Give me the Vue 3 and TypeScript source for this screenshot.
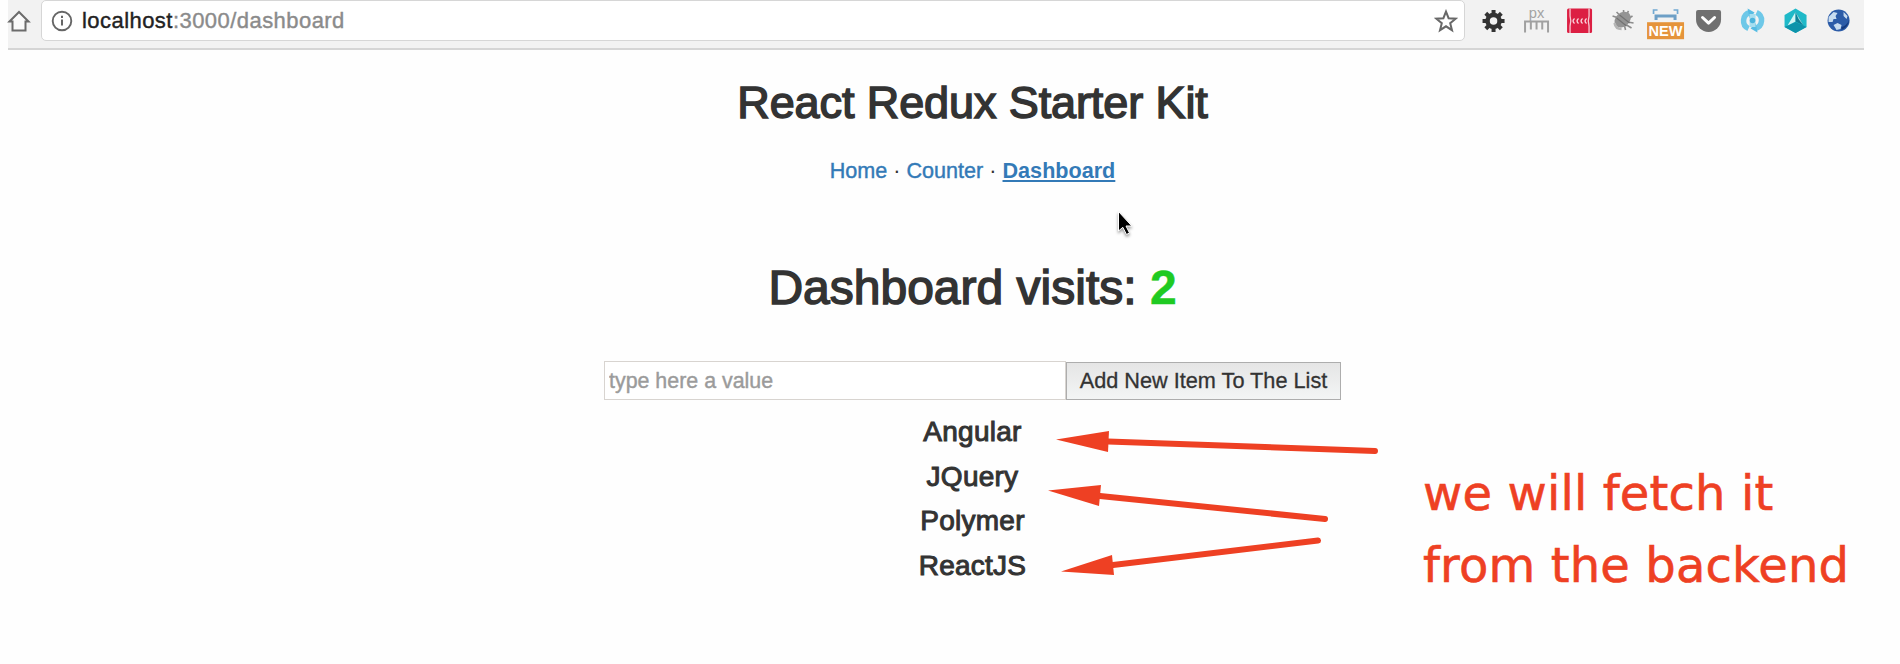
<script setup lang="ts">
import { ref } from 'vue'

interface Arrow {
  head: string
  line: [number, number, number, number]
}

const visits = ref<number>(2)
const draft = ref<string>('')
const items = ref<string[]>(['Angular', 'JQuery', 'Polymer', 'ReactJS'])
const notes: string[] = ['we will fetch it', 'from the backend']
const gearTeeth: number[] = [0, 45, 90, 135, 180, 225, 270, 315]

const arrows: Arrow[] = [
  { head: '1056,439.5 1109,431 1108,452', line: [1108, 441.5, 1375, 451] },
  { head: '1048,490.5 1101,485 1099,506', line: [1100, 496, 1325, 519] },
  { head: '1061,571.5 1112,555 1114,575', line: [1113, 565, 1318, 540.5] },
]

function addItem(): void {
  const value = draft.value.trim()
  if (value) {
    items.value.push(value)
    draft.value = ''
  }
}
</script>

<template>
  <div class="page">
    <header class="toolbar">
      <svg class="home" viewBox="0 0 24 24">
        <path d="M2.5 12.5 12 3l9.500 9.500H18.500V21.500H5.500V12.500Z" fill="#fafafa" stroke="#6b6b6b" stroke-width="2" />
      </svg>
      <div class="omnibox">
        <svg class="info" viewBox="0 0 22 22">
          <circle cx="11" cy="11" r="9.300" fill="none" stroke="#666" stroke-width="1.900" />
          <path d="M11 9.600v6M11 5.800v2.100" stroke="#666" stroke-width="2" />
        </svg>
        <span class="url"><span class="host">localhost</span>:3000/dashboard</span>
        <svg class="star" viewBox="0 0 24 24">
          <path d="M12 2.600 14.600 9.200 21.700 9.700 16.200 14.200 18 21.200 12 17.300 6 21.200 7.800 14.200 2.300 9.700 9.400 9.200Z" fill="none" stroke="#686868" stroke-width="2" />
        </svg>
      </div>
      <div class="extensions">
        <svg viewBox="-21.500 -21 43 50">
          <g fill="#333">
            <rect v-for="a in gearTeeth" :key="a" x="-2" y="-11" width="4" height="6" :transform="`rotate(${a})`" />
          </g>
          <circle r="6" fill="none" stroke="#333" stroke-width="4.500" />
        </svg>
        <svg viewBox="-21.500 -21 43 50">
          <text class="px" x="0" y="-3.500" text-anchor="middle" textLength="15.500" lengthAdjust="spacingAndGlyphs">px</text>
          <path d="M-11.500 11.500V.5H11.500V11.500M-5.700 1V8.500M0 1V8.500M5.700 1V8.500" fill="none" stroke="#a0a0a0" stroke-width="2" />
        </svg>
        <svg viewBox="-21.500 -21 43 50">
          <rect x="-12.500" y="-12.500" width="25" height="24.500" rx="1.500" fill="#dc1f43" />
          <path d="M-9.500-12.500V-5Q-8 0-9.500 5V12M9.500-12.500V-5Q8 0 9.500 5V12" fill="none" stroke="#f7c9d2" stroke-width="1.300" />
          <path d="M-5-2.500q-3 2.500 0 5M-1-2.500q-3 2.500 0 5M3-2.500q-3 2.500 0 5M7-2.500q-3 2.500 0 5" fill="none" stroke="#f9d5dc" stroke-width="1.400" />
        </svg>
        <svg viewBox="-21.500 -21 43 50">
          <path d="M-10-5-4-3M-6-9-2-5M1-11V-5M6-10 3-5M10-5 5-2M11 2 5 1M9 7 4 4M3 9 2 5" stroke="#8c8c8c" stroke-width="1.600" />
          <ellipse cx="1" cy="-1" rx="9" ry="7" transform="rotate(-42)" fill="#949494" />
          <path d="M-6-3 4 5M-3-6 7 2" stroke="#737373" stroke-width="1.200" />
          <path d="M-8 2Q-7 8-1 8" fill="none" stroke="#b5b5b5" stroke-width="2.500" />
        </svg>
        <svg viewBox="-21.500 -21 43 50">
          <path d="M-12-7V-11H-8M8-11H12V-7" fill="none" stroke="#72a9d2" stroke-width="1.700" />
          <path d="M-9.500-1V-5H9.500V-1" fill="none" stroke="#6d9fc6" stroke-width="3" />
          <rect x="-18.500" y="1.200" width="37" height="17" fill="#e5943b" />
          <text class="new" x="0" y="15.200" text-anchor="middle" textLength="34" lengthAdjust="spacingAndGlyphs">NEW</text>
        </svg>
        <svg viewBox="-21.500 -21 43 50">
          <path d="M-10.500-11H10.500Q12.500-11 12.500-9V-1.500A12.500 12.500 0 0 1-12.500-1.500V-9Q-12.500-11-10.500-11Z" fill="#707070" />
          <path d="M-6-3.500 0 2.200 6-3.500" fill="none" stroke="#fff" stroke-width="3" stroke-linecap="round" stroke-linejoin="round" />
        </svg>
        <svg viewBox="-21.500 -21 43 50">
          <path d="M-2.500-8.500A8.500 8.500 0 0 0-4 7.500M2.500 7.500A8.500 8.500 0 0 0 4-8.500" fill="none" stroke="#6ec8e8" stroke-width="5.500" />
          <path d="M-5-12.500 2-8.500-3-3ZM5 11.500-2 7.500 3 2Z" fill="#55bce3" />
          <path d="M0-7V6" stroke="#a6deef" stroke-width="6" />
          <circle cy="-.5" r="2.800" fill="#4bb4dc" />
        </svg>
        <svg viewBox="-21.500 -21 43 50">
          <path d="M0-12.500 11-6V6L0 12-11 6V-6Z" fill="#1fb9c8" />
          <path d="M-11 6 0 1 11 6 0 12Z" fill="#0d93aa" />
          <path d="M0-9-8 4.500 0 .5Z" fill="#d3f4f3" />
          <path d="M0-9 8 4.500 0 .5Z" fill="#107f96" />
          <path d="M0-9 8 4.500 3-2Z" fill="#a8e6e8" />
        </svg>
        <svg viewBox="-21.500 -21 43 50">
          <circle cy="-.5" r="11" fill="#2c5ca8" />
          <path d="M-10-4-5-9-1-8-3-5-2-2-5-2-6 1-10 1ZM-5 4-1 2 3 4 2 8-2 9ZM5-9 9-5 8-2 5-5Z" fill="#c8dcf0" />
          <path d="M3 9Q10 6 10.500-1Q8 5 3 6Z" fill="#153a7d" />
        </svg>
      </div>
    </header>

    <main>
      <h1>React Redux Starter Kit</h1>
      <nav>
        <a>Home</a> · <a>Counter</a> · <a class="active">Dashboard</a>
      </nav>
      <h2>Dashboard visits: <span class="count">{{ visits }}</span></h2>
      <form @submit.prevent="addItem">
        <input v-model="draft" type="text" placeholder="type here a value" />
        <button type="submit">Add New Item To The List</button>
      </form>
      <ul>
        <li v-for="item in items" :key="item">{{ item }}</li>
      </ul>
    </main>

    <svg class="overlay" viewBox="0 0 1900 664">
      <g v-for="arrow in arrows" :key="arrow.head">
        <line :x1="arrow.line[0]" :y1="arrow.line[1]" :x2="arrow.line[2]" :y2="arrow.line[3]" />
        <polygon :points="arrow.head" />
      </g>
      <path class="cursor" d="M1118.500 211.500V231L1122.800 227.300 1126.500 234.500 1129.500 233 1126 226H1131.800Z" />
    </svg>
    <div class="annotation">
      <div v-for="note in notes" :key="note">{{ note }}</div>
    </div>
  </div>
</template>

<style>
body {
  margin: 0;
  background: #fff;
}
</style>

<style scoped>
.page {
  position: relative;
  width: 1900px;
  height: 664px;
  overflow: hidden;
  background: #fefefe;
  color: #333;
  font-family: "Liberation Sans", Arial, sans-serif;
}

.toolbar {
  display: flex;
  box-sizing: border-box;
  width: 1856px;
  height: 50px;
  margin-left: 8px;
  background: #f2f2f2;
  border-bottom: 2px solid #d5d5d5;
}

.home {
  flex: none;
  width: 24px;
  height: 24px;
  margin: 9px 10px 0 -1px;
}

.omnibox {
  display: flex;
  flex: none;
  align-items: center;
  box-sizing: border-box;
  width: 1424px;
  height: 41px;
  padding: 1px 6px 0 9px;
  background: #fff;
  border: 1px solid #d6d6d6;
  border-radius: 5px;
}

.info {
  width: 22px;
  height: 22px;
  margin-right: 9px;
}

.url {
  flex: 1;
  color: #8b8b8b;
  font-size: 22px;
  line-height: 26px;
  letter-spacing: 0.45px;
  -webkit-text-stroke: 0.4px;
}

.host {
  color: #222;
}

.star {
  width: 24px;
  height: 24px;
}

.extensions {
  display: flex;
  margin-left: 7px;
}

.extensions svg {
  flex: none;
  width: 43.1px;
  height: 50px;
}

.px {
  fill: #a3a3a3;
  font: 15px "Liberation Sans", sans-serif;
}

.new {
  fill: #fff;
  font: bold 14.5px "Liberation Sans", sans-serif;
}

main {
  display: flex;
  flex-direction: column;
  align-items: center;
  padding-left: 45px;
}

h1,
h2 {
  margin: 0;
  font-weight: 400;
  -webkit-text-stroke: 1.5px #333;
}

h1 {
  margin-top: 28px;
  font-size: 45px;
  line-height: 50px;
  letter-spacing: -0.1px;
}

nav {
  margin-top: 28px;
  font-size: 21.6px;
  line-height: 30px;
}

a {
  color: #337ab7;
  -webkit-text-stroke: 0.4px;
}

.active {
  font-weight: 700;
  text-decoration: underline;
  text-decoration-thickness: 2px;
  text-underline-offset: 2px;
  -webkit-text-stroke: 0;
}

h2 {
  margin-top: 72px;
  font-size: 48px;
  line-height: 60px;
}

.count {
  color: #1fca22;
  font-weight: 700;
  -webkit-text-stroke: 0.5px #1fca22;
}

form {
  display: flex;
  align-items: flex-end;
  height: 39px;
  margin-top: 43px;
}

input,
button {
  box-sizing: border-box;
  margin: 0;
  font-family: inherit;
  color: #333;
}

input {
  width: 462px;
  height: 39px;
  padding: 2px 4px 0;
  border: 1px solid #d8d4d0;
  border-radius: 0;
  background: #fff;
  font-size: 21.4px;
}

input::placeholder {
  color: #9b9b9b;
  -webkit-text-stroke: 0.4px;
}

button {
  width: 275px;
  height: 38px;
  padding: 0;
  border: 1px solid #adadad;
  background: linear-gradient(#e5e5e5, #f3f5f5);
  font-size: 21.7px;
  white-space: nowrap;
  -webkit-text-stroke: 0.3px;
}

ul {
  margin: 10px 0 0;
  padding: 0;
  list-style: none;
}

li {
  font-size: 28px;
  line-height: 44.7px;
  letter-spacing: 0.25px;
  text-align: center;
  -webkit-text-stroke: 1px #333;
}

.overlay {
  position: absolute;
  inset: 0;
  width: 1900px;
  height: 664px;
  pointer-events: none;
}

.overlay line {
  stroke: #ee4023;
  stroke-width: 6px;
  stroke-linecap: round;
}

.overlay polygon {
  fill: #ee4023;
}

.cursor {
  fill: #000;
  stroke: #fff;
  stroke-width: 1px;
  filter: drop-shadow(0 2px 1.5px rgba(0, 0, 0, 0.4));
}

.annotation {
  position: absolute;
  top: 457px;
  left: 1423px;
  color: #ee4023;
  font-family: "DejaVu Sans", Verdana, sans-serif;
  font-size: 48px;
  line-height: 72px;
  letter-spacing: 0.15px;
  white-space: nowrap;
  -webkit-text-stroke: 0.6px;
}
</style>
